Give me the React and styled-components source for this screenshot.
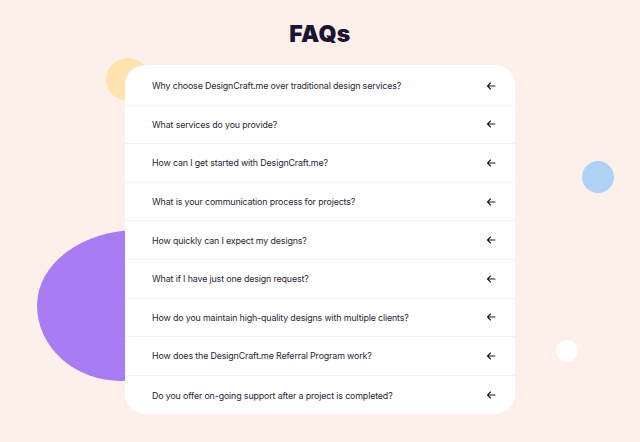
import styled, { createGlobalStyle } from "styled-components";

const GlobalStyle = createGlobalStyle`
    html, body {
        margin: 0;
        padding: 0;
        background: #fdf0eb;
    }
    * { box-sizing: border-box; }
`;

const questions = [
    "Why choose DesignCraft.me over traditional design services?",
    "What services do you provide?",
    "How can I get started with DesignCraft.me?",
    "What is your communication process for projects?",
    "How quickly can I expect my designs?",
    "What if I have just one design request?",
    "How do you maintain high-quality designs with multiple clients?",
    "How does the DesignCraft.me Referral Program work?",
    "Do you offer on-going support after a project is completed?",
];

function ArrowLeft() {
    return (
        <svg width="10" height="10" viewBox="0 0 10 10" fill="none">
            <path d="M9 5H1.5M4.5 2L1.5 5L4.5 8" stroke="#1d1a24" strokeWidth="1.1" strokeLinecap="round" strokeLinejoin="round" />
        </svg>
    );
}

export default function App() {
    return (
        <>
            <GlobalStyle />
            <Page>
                <Blob $color="#fde3b0" $left={106} $top={58} $w={44} $h={43} />
                <PurpleBlob />
                <Blob $color="#aed2f6" $left={582} $top={161} $w={32} $h={32} />
                <Blob $color="#ffffff" $left={556} $top={340} $w={22} $h={22} />
                <Titulo>FAQs</Titulo>
                <Card>
                    {questions.map((q, i) => (
                        <Row key={i} $last={i === questions.length - 1}>
                            <span>{q}</span>
                            <ArrowLeft />
                        </Row>
                    ))}
                </Card>
            </Page>
        </>
    );
}

const Page = styled.div`
    position: relative;
    width: 640px;
    height: 442px;
    overflow: hidden;
    display: flex;
    flex-direction: column;
    align-items: center;
    padding-top: 19px;
    font-family: Inter, "Noto Sans", sans-serif;
`;

const Titulo = styled.h1`
    margin: 0 0 16px;
    font-family: Inter, sans-serif;
    font-weight: 900;
    font-size: 23px;
    line-height: 30px;
    letter-spacing: 0.3px;
    color: #1d1433;
    position: relative;
    z-index: 1;
`;

const Blob = styled.div`
    position: absolute;
    left: ${p => p.$left}px;
    top: ${p => p.$top}px;
    width: ${p => p.$w}px;
    height: ${p => p.$h}px;
    border-radius: 50%;
    background: ${p => p.$color};
`;

const PurpleBlob = styled.div`
    position: absolute;
    left: 37px;
    top: 230px;
    width: 168px;
    height: 151px;
    background: #a97cf4;
    border-radius: 60% 40% 50% 50% / 50% 50% 50% 50%;
`;

const Card = styled.div`
    position: relative;
    z-index: 1;
    width: 390px;
    padding-top: 2px;
    background: #ffffff;
    border-radius: 20px;
    display: flex;
    flex-direction: column;
`;

const Row = styled.div`
    height: 38.6px;
    display: flex;
    align-items: center;
    justify-content: space-between;
    padding: 0 19px 0 27px;
    border-bottom: ${p => (p.$last ? "none" : "1px solid #f6f3f2")};
    span {
        font-size: 8.9px;
        color: #2a2535;
        letter-spacing: -0.15px;
    }
`;
